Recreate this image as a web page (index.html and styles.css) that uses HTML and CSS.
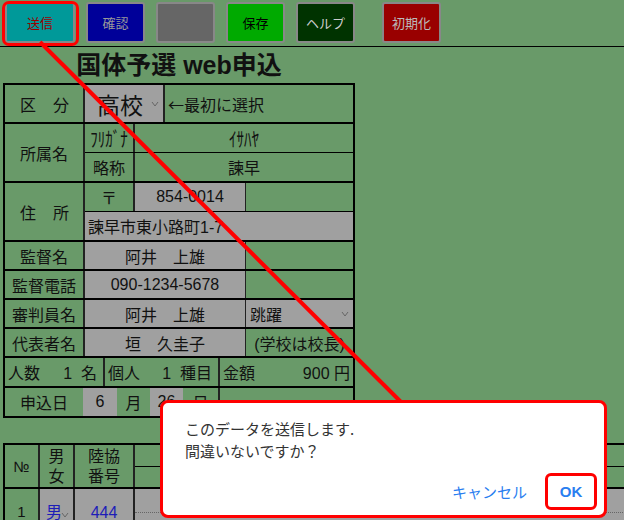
FILE: index.html
```html
<!DOCTYPE html>
<html lang="ja">
<head>
    <meta charset="UTF-8">
    <meta name="viewport" content="width=device-width, initial-scale=1.0">
    <title>国体予選 web申込</title>
    <link rel="stylesheet" href="styles.css">
</head>
<body>
<div class="page">

    <div class="toolbar">
        <button class="btn btn-send">送信</button>
        <button class="btn btn-check">確認</button>
        <button class="btn btn-blank"></button>
        <button class="btn btn-save">保存</button>
        <button class="btn btn-help">ヘルプ</button>
        <button class="btn btn-reset">初期化</button>
    </div>

    <h1 class="title">国体予選 web申込</h1>

    <!-- 学校情報 -->
    <div class="sheet">
        <div class="row row-first">
            <div class="label spread"><span>区</span><span>分</span></div>
            <div class="cell gray select big w80">高校<svg class="chev" width="8" height="6" viewBox="0 0 8 6"><polyline points="1,1 4,5 7,1" fill="none" stroke="#666" stroke-width="1"/></svg></div>
            <div class="cell note">←最初に選択</div>
        </div>

        <div class="row row-double">
            <div class="label">所属名</div>
            <div class="sub">
                <div class="subrow">
                    <div class="sublabel"><span class="hankaku">ﾌﾘｶﾞﾅ</span></div>
                    <div class="cell center"><span class="hankaku">ｲｻﾊﾔ</span></div>
                </div>
                <div class="subrow">
                    <div class="sublabel">略称</div>
                    <div class="cell center">諫早</div>
                </div>
            </div>
        </div>

        <div class="row row-double">
            <div class="label spread"><span>住</span><span>所</span></div>
            <div class="sub">
                <div class="subrow">
                    <div class="sublabel">〒</div>
                    <div class="cell gray center w112">854-0014</div>
                    <div class="cell thin"></div>
                </div>
                <div class="subrow gray">
                    <div class="address">諫早市東小路町1-7</div>
                </div>
            </div>
        </div>

        <div class="row">
            <div class="label">監督名</div>
            <div class="cell gray center w162">阿井　上雄</div>
            <div class="cell thin"></div>
        </div>
        <div class="row">
            <div class="label">監督電話</div>
            <div class="cell gray center w162">090-1234-5678</div>
            <div class="cell thin"></div>
        </div>
        <div class="row">
            <div class="label">審判員名</div>
            <div class="cell gray center w162">阿井　上雄</div>
            <div class="cell thin gray select pick">跳躍<svg class="chev" width="8" height="6" viewBox="0 0 8 6"><polyline points="1,1 4,5 7,1" fill="none" stroke="#666" stroke-width="1"/></svg></div>
        </div>
        <div class="row">
            <div class="label">代表者名</div>
            <div class="cell gray center w162">垣　久圭子</div>
            <div class="cell thin center">(学校は校長)</div>
        </div>

        <div class="row row-tall">
            <div class="count c-people"><span>人数</span><span>1&nbsp;&nbsp;名</span></div>
            <div class="count c-events"><span>個人</span><span>1&nbsp;&nbsp;種目</span></div>
            <div class="count c-fee"><span>金額</span><span>900 円</span></div>
        </div>

        <div class="row row-tall">
            <div class="label">申込日</div>
            <div class="date gray w34">6</div>
            <div class="date w33">月</div>
            <div class="date gray w33">26</div>
            <div class="date w35">日</div>
            <div class="cell"></div>
        </div>
    </div>

    <!-- 選手一覧 -->
    <div class="entries">
        <div class="e-head">
            <div class="e-no">№</div>
            <div class="e-sex">男<br>女</div>
            <div class="e-id">陸協<br>番号</div>
            <div class="e-rest">
                <div class="e-line"></div>
                <div class="e-line"></div>
            </div>
        </div>
        <div class="e-row">
            <div class="e-no">1</div>
            <div class="e-sex gray blue">男<svg class="chev" width="8" height="6" viewBox="0 0 8 6"><polyline points="1,1 4,5 7,1" fill="none" stroke="#666" stroke-width="1"/></svg></div>
            <div class="e-id gray blue">444</div>
            <div class="e-rest gray">
                <div class="e-line"></div>
                <div class="e-line dotted"></div>
            </div>
        </div>
    </div>

    <!-- 注釈 -->
    <svg class="arrow" width="624" height="520" viewBox="0 0 624 520">
        <line x1="40" y1="42" x2="401" y2="402" stroke="#ff0000" stroke-width="4"/>
    </svg>
    <div class="mark-send"></div>

    <div class="dialog">
        <p class="msg">このデータを送信します.<br>間違いないですか？</p>
        <div class="actions">
            <span class="link">キャンセル</span>
            <span class="link ok">OK</span>
        </div>
    </div>

</div>
</body>
</html>
```

FILE: styles.css
```css
* {
    box-sizing: border-box;
}
body {
    margin: 0;
    background: #699a69;
    font-family: "Liberation Sans", "Noto Sans CJK JP", sans-serif;
    color: #111;
    overflow: hidden;
}
.page {
    position: relative;
    width: 624px;
    height: 520px;
    overflow: hidden;
}

/* ツールバー */
.toolbar {
    display: flex;
    height: 47px;
    padding: 2px 0 0 5px;
    border-bottom: 1px solid #000;
}
.btn {
    width: 59px;
    height: 41px;
    margin-right: 11px;
    padding: 0;
    border: 2px solid #888;
    border-radius: 3px;
    font-family: "Liberation Sans", "Noto Sans CJK JP", sans-serif;
    font-size: 13px;
}
.btn-send { width: 70px; background: #009999; color: #990000; }
.btn-check { background: #000099; color: #999; }
.btn-blank { background: #666; }
.btn-save { background: #00aa00; color: #000; }
.btn-help { background: #003300; color: #ccc; margin-right: 27px; }
.btn-reset { background: #990000; color: #bbb; }

.title {
    width: 352px;
    height: 36px;
    margin: 0 0 0 3px;
    line-height: 36px;
    text-align: center;
    font-size: 25px;
    font-weight: bold;
}

/* 学校情報 */
.sheet {
    width: 352px;
    margin-left: 3px;
    border: 2px solid #000;
    font-size: 16px;
}
.row {
    display: flex;
    height: 29px;
    border-top: 2px solid #000;
}
.row-first {
    height: 37px;
    border-top: 0;
}
.row-double {
    height: 59px;
}
.row-tall {
    height: 30px;
}
.label {
    width: 78px;
    display: flex;
    align-items: center;
    justify-content: center;
}
.label.spread {
    justify-content: space-between;
    padding: 0 14px 0 15px;
}
.cell {
    flex: 1;
    display: flex;
    align-items: center;
    border-left: 2px solid #222;
}
.cell.thin {
    border-left-width: 1px;
}
.w80 { flex: none; width: 80px; }
.w112 { flex: none; width: 112px; }
.w162 { flex: none; width: 162px; }
.center {
    justify-content: center;
}
.gray {
    background: #a0a0a0;
}
.big {
    font-size: 23px;
    padding-left: 12px;
}
.select {
    position: relative;
}
.chev {
    position: absolute;
    right: 4px;
    top: 50%;
    margin-top: -3px;
}
.note {
    padding-left: 3px;
    font-family: "Noto Sans CJK JP", sans-serif;
}
.pick {
    padding-left: 4px;
}
.sub {
    flex: 1;
    display: flex;
    flex-direction: column;
    border-left: 2px solid #222;
}
.subrow {
    flex: 1;
    display: flex;
}
.subrow + .subrow {
    border-top: 1px solid #000;
}
.sublabel {
    width: 48px;
    display: flex;
    align-items: center;
    justify-content: center;
}
.hankaku {
    display: inline-block;
    font-size: 15px;
    transform: scaleY(1.35);
}
.address {
    display: flex;
    align-items: center;
    padding-left: 3px;
}
.count {
    display: flex;
    align-items: center;
    justify-content: space-between;
    padding: 0 6px 0 3px;
}
.c-people { width: 98px; }
.c-events { width: 115px; border-left: 2px solid #222; }
.c-fee { flex: 1; border-left: 2px solid #222; padding-right: 3px; }
.date {
    display: flex;
    align-items: center;
    justify-content: center;
}
.w33 { width: 33px; }
.w34 { width: 34px; }
.w35 { width: 35px; }

/* 選手一覧 */
.entries {
    width: 700px;
    margin: 25px 0 0 3px;
    border: 2px solid #000;
    font-size: 16px;
}
.e-head,
.e-row {
    display: flex;
    height: 42px;
}
.e-row {
    height: 60px;
    border-top: 2px solid #000;
}
.e-no {
    width: 33px;
    display: flex;
    align-items: center;
    justify-content: center;
    font-size: 15px;
}
.e-sex,
.e-id {
    display: flex;
    align-items: center;
    justify-content: center;
    text-align: center;
    line-height: 20px;
    border-left: 2px solid #222;
}
.e-head .e-sex,
.e-head .e-id {
    padding-top: 2px;
}
.e-sex {
    width: 35px;
    position: relative;
    justify-content: flex-start;
    padding-left: 6px;
}
.e-head .e-sex {
    justify-content: center;
    padding-left: 0;
}
.e-id {
    width: 60px;
}
.e-row .e-sex,
.e-row .e-id,
.e-row .e-no {
    align-items: flex-start;
    padding-top: 14px;
}
.e-row .e-sex .chev {
    top: 26px;
}
.blue {
    color: #1d1db8;
}
.e-rest {
    flex: 1;
    display: flex;
    flex-direction: column;
    border-left: 2px solid #222;
}
.e-line {
    flex: 1;
}
.e-head .e-line + .e-line {
    border-top: 1px solid #000;
}
.e-row .e-line {
    flex: none;
    height: 23px;
}
.e-row .e-line + .e-line {
    border-top: 1px solid #666;
}
.e-row .e-line.dotted {
    border-top-style: dotted;
}

/* 注釈 */
.arrow {
    position: absolute;
    left: 0;
    top: 0;
    pointer-events: none;
}
.mark-send {
    position: absolute;
    left: 2px;
    top: 1px;
    width: 77px;
    height: 45px;
    border: 3px solid #ff0000;
    border-radius: 7px;
}
.dialog {
    position: absolute;
    left: 160px;
    top: 400px;
    width: 447px;
    height: 118px;
    background: #fff;
    border: 3px solid #ff0000;
    border-radius: 8px;
    font-family: "Noto Sans CJK JP", sans-serif;
}
.msg {
    margin: 0;
    padding: 15px 0 0 22px;
    font-size: 15px;
    line-height: 22px;
    color: #333;
}
.actions {
    display: flex;
    justify-content: flex-end;
    align-items: center;
    margin: 11px 7px 0 0;
}
.link {
    color: #2a7ef0;
    font-size: 15px;
}
.ok {
    width: 52px;
    height: 37px;
    margin-left: 18px;
    display: flex;
    align-items: center;
    justify-content: center;
    border: 3px solid #ff0000;
    border-radius: 6px;
    font-family: "Liberation Sans", sans-serif;
    font-weight: bold;
}
```
